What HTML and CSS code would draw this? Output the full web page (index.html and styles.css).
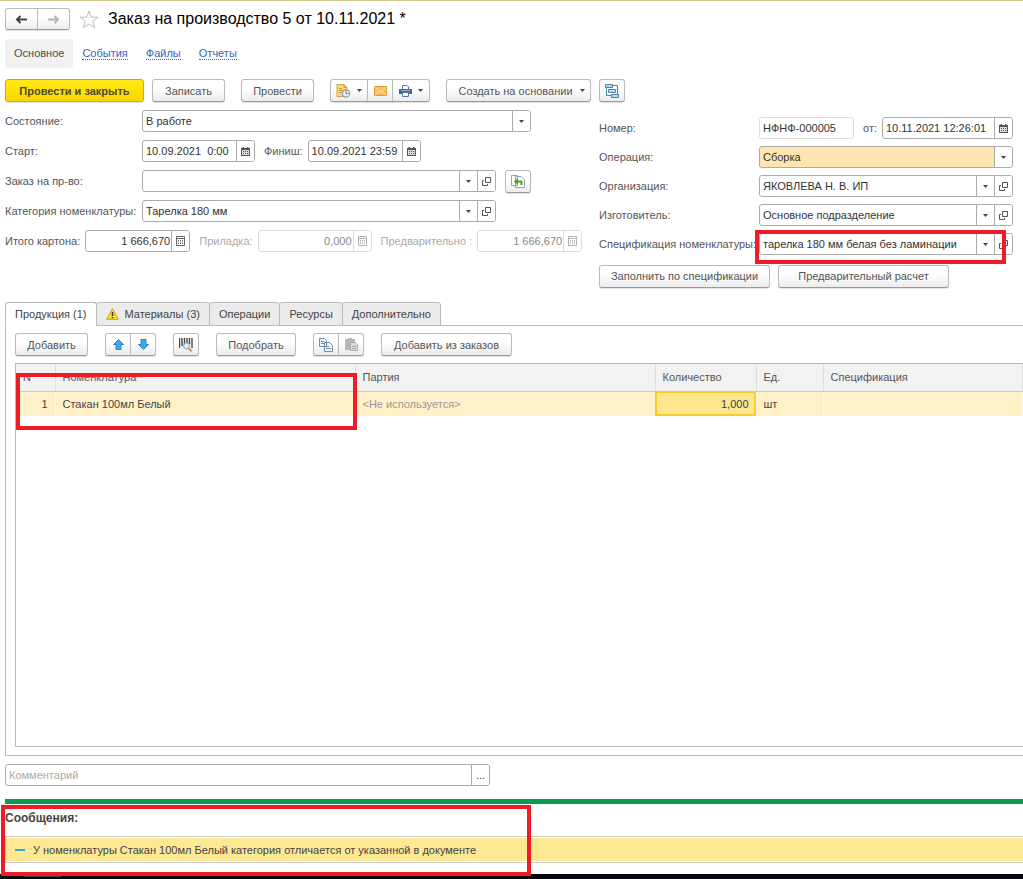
FILE: index.html
```html
<!DOCTYPE html>
<html lang="ru">
<head>
    <meta charset="UTF-8">
    <meta name="viewport" content="width=device-width, initial-scale=1.0">
    <title>Заказ на производство 5 от 10.11.2021 *</title>
    <link rel="stylesheet" href="styles.css">
</head>
<body>
    <svg class="sprite" aria-hidden="true">
        <symbol id="i-caret" viewBox="0 0 5 3"><path d="M0 0h5L2.5 3z" fill="#444"/></symbol>
        <symbol id="i-open" viewBox="0 0 9 9"><path d="M3.5.5h5v5h-5zM2 3.5H.5v5h5V7" fill="none" stroke="#555"/></symbol>
        <symbol id="i-date" viewBox="0 0 9 9"><path d="M0 1h1.500V0H3v1h3V0h1.500v1H9v8H0z" fill="#555"/><path d="M1 3h7v5H1z" fill="#ddd"/><path d="M2 4.500h5M2 6.500h5" stroke="#555" stroke-dasharray="1 1"/></symbol>
        <symbol id="i-calc" viewBox="0 0 9 10"><path d="M.5.5h8v9h-8zM.5 2.500h8" fill="none" stroke="#666"/><path d="M2 4.500h5M2 6h5M2 7.500h5" stroke="#666" stroke-dasharray="1 1"/></symbol>
    </svg>

    <header class="title-bar">
        <div class="group">
            <button type="button" class="btn nav" aria-label="Назад"><svg width="13" height="9" viewBox="0 0 13 9"><path d="M12 4.500H2M5.500 1L2 4.500 5.500 8" fill="none" stroke="#444" stroke-width="2"/></svg></button>
            <button type="button" class="btn nav" aria-label="Вперед"><svg width="13" height="9" viewBox="0 0 13 9"><path d="M1 4.500h10M7.500 1L11 4.500 7.500 8" fill="none" stroke="#b5b5b5" stroke-width="2"/></svg></button>
        </div>
        <button type="button" class="star" aria-label="В избранное"><svg width="20" height="19" viewBox="0 0 20 19"><path d="M10 1l2.300 6.200H19l-5.300 4 2 6.600L10 13.900l-5.700 3.900 2-6.600L1 7.200h6.700z" fill="#fff" stroke="#b9bdc3"/></svg></button>
        <h1>Заказ на производство 5 от 10.11.2021 *</h1>
    </header>

    <nav class="sections">
        <a href="#main" class="current">Основное</a>
        <a href="#events"><span>События</span></a>
        <a href="#files"><span>Файлы</span></a>
        <a href="#reports"><span>Отчеты</span></a>
    </nav>

    <div class="commands">
        <button type="button" class="btn primary">Провести и закрыть</button>
        <button type="button" class="btn w-72">Записать</button>
        <button type="button" class="btn w-72 apart">Провести</button>
        <div class="group apart">
            <button type="button" class="btn drop" aria-label="Создать задачу">
                <svg width="15" height="14" viewBox="0 0 15 14"><path d="M1 .5h7l3 3v9H1z" fill="#f6d678" stroke="#d2a63f"/><path d="M8 .5v3h3M3 4.500h3M3 6.500h4M3 8.500h3" fill="none" stroke="#c99a35"/><circle cx="10" cy="9.500" r="3.700" fill="#eef4fa" stroke="#7089ab"/><path d="M10 6.500v3h2.500" fill="none" stroke="#d06030"/></svg>
                <svg width="5" height="3"><use href="#i-caret"/></svg>
            </button>
            <button type="button" class="btn icon" aria-label="Отправить"><svg width="13" height="10" viewBox="0 0 13 10"><path d="M.5.5h12v9H.5z" fill="#f5bf5d" stroke="#d99c3a"/><path d="M1 1l5.500 5L12 1M1 9l4-4.200M12 9L8 4.800" fill="none" stroke="#fbe3b2"/></svg></button>
            <button type="button" class="btn drop" aria-label="Печать">
                <svg width="13" height="12" viewBox="0 0 13 12"><path d="M3.500 4V.5H8L9.500 2v2" fill="#fff" stroke="#57789a"/><path d="M0 4h13v5H0z" fill="#3f6b92"/><path d="M3.500 7.500h6v4h-6z" fill="#fff" stroke="#57789a"/><path d="M2 5.500h9" stroke="#8fb0cc"/></svg>
                <svg width="5" height="3"><use href="#i-caret"/></svg>
            </button>
        </div>
        <button type="button" class="btn based apart">Создать на основании <svg width="5" height="3"><use href="#i-caret"/></svg></button>
        <button type="button" class="btn icon" aria-label="Структура подчиненности"><svg width="14" height="14" viewBox="0 0 14 14"><path d="M1.500 3.500v8H6M8 1.500h4.500V10" fill="none" stroke="#4a83a8"/><g fill="#b5d9ee" stroke="#4a83a8"><path d="M.5.5h7v3h-7zM3.500 5.500h7v3h-7zM6.500 10.500h7v3h-7z"/></g></svg></button>
    </div>

    <form class="details">
        <div class="column">
            <div class="row">
                <label for="state" class="caption">Состояние:</label>
                <div class="field grow">
                    <select id="state"><option>В работе</option></select>
                    <span class="side"><svg width="5" height="3"><use href="#i-caret"/></svg></span>
                </div>
            </div>
            <div class="row">
                <label for="start" class="caption">Старт:</label>
                <div class="field date">
                    <input type="text" id="start" value="10.09.2021&nbsp; 0:00">
                    <button type="button" class="side" aria-label="Выбрать дату"><svg width="9" height="9"><use href="#i-date"/></svg></button>
                </div>
                <label for="finish" class="next">Финиш:</label>
                <div class="field date">
                    <input type="text" id="finish" value="10.09.2021 23:59">
                    <button type="button" class="side" aria-label="Выбрать дату"><svg width="9" height="9"><use href="#i-date"/></svg></button>
                </div>
            </div>
            <div class="row">
                <label for="order" class="caption">Заказ на пр-во:</label>
                <div class="field grow">
                    <select id="order"><option></option></select>
                    <span class="side"><svg width="5" height="3"><use href="#i-caret"/></svg></span>
                    <button type="button" class="side" aria-label="Открыть"><svg width="9" height="9"><use href="#i-open"/></svg></button>
                </div>
                <button type="button" class="btn icon fill" aria-label="Заполнить по заказу"><svg width="14" height="13" viewBox="0 0 14 13"><path d="M.5.5h6v10h-6zM4.500 1.500h6l3 3v8h-9z" fill="#fff" stroke="#8fa5b5"/><path d="M10.500 10V6.500H6" fill="none" stroke="#3aa914" stroke-width="2"/><path d="M3 6.500L7 3v7z" fill="#3aa914"/></svg></button>
            </div>
            <div class="row">
                <label for="category" class="caption">Категория номенклатуры:</label>
                <div class="field grow short">
                    <select id="category"><option>Тарелка 180 мм</option></select>
                    <span class="side"><svg width="5" height="3"><use href="#i-caret"/></svg></span>
                    <button type="button" class="side" aria-label="Открыть"><svg width="9" height="9"><use href="#i-open"/></svg></button>
                </div>
            </div>
            <div class="row totals">
                <label for="total">Итого картона:</label>
                <div class="field number">
                    <input type="text" id="total" value="1 666,670">
                    <button type="button" class="side" aria-label="Калькулятор"><svg width="9" height="10"><use href="#i-calc"/></svg></button>
                </div>
                <label for="setup" class="next off">Приладка:</label>
                <div class="field number wide off">
                    <input type="text" id="setup" value="0,000" disabled>
                    <button type="button" class="side" aria-label="Калькулятор" disabled><svg width="9" height="10"><use href="#i-calc"/></svg></button>
                </div>
                <label for="prelim" class="next off">Предварительно :</label>
                <div class="field number off">
                    <input type="text" id="prelim" value="1 666,670" disabled>
                    <button type="button" class="side" aria-label="Калькулятор" disabled><svg width="9" height="10"><use href="#i-calc"/></svg></button>
                </div>
            </div>
        </div>

        <div class="column right">
            <div class="row">
                <label for="number" class="caption">Номер:</label>
                <div class="field grow pale"><input type="text" id="number" value="НФНФ-000005"></div>
                <label for="date" class="next">от:</label>
                <div class="field stamp">
                    <input type="text" id="date" value="10.11.2021 12:26:01">
                    <button type="button" class="side" aria-label="Выбрать дату"><svg width="9" height="9"><use href="#i-date"/></svg></button>
                </div>
            </div>
            <div class="row">
                <label for="operation" class="caption">Операция:</label>
                <div class="field grow accent">
                    <select id="operation"><option>Сборка</option></select>
                    <span class="side"><svg width="5" height="3"><use href="#i-caret"/></svg></span>
                </div>
            </div>
            <div class="row">
                <label for="company" class="caption">Организация:</label>
                <div class="field grow">
                    <select id="company"><option>ЯКОВЛЕВА Н. В. ИП</option></select>
                    <span class="side"><svg width="5" height="3"><use href="#i-caret"/></svg></span>
                    <button type="button" class="side" aria-label="Открыть"><svg width="9" height="9"><use href="#i-open"/></svg></button>
                </div>
            </div>
            <div class="row">
                <label for="maker" class="caption">Изготовитель:</label>
                <div class="field grow">
                    <select id="maker"><option>Основное подразделение</option></select>
                    <span class="side"><svg width="5" height="3"><use href="#i-caret"/></svg></span>
                    <button type="button" class="side" aria-label="Открыть"><svg width="9" height="9"><use href="#i-open"/></svg></button>
                </div>
            </div>
            <div class="row">
                <label for="spec" class="caption">Спецификация номенклатуры:</label>
                <div class="field grow">
                    <select id="spec"><option>тарелка 180 мм белая без ламинации</option></select>
                    <span class="side"><svg width="5" height="3"><use href="#i-caret"/></svg></span>
                    <button type="button" class="side" aria-label="Открыть"><svg width="9" height="9"><use href="#i-open"/></svg></button>
                    <span class="mark mark-spec"></span>
                </div>
            </div>
            <div class="row actions">
                <button type="button" class="btn">Заполнить по спецификации</button>
                <button type="button" class="btn">Предварительный расчет</button>
            </div>
        </div>
    </form>

    <div class="tabs" role="tablist">
        <button type="button" role="tab" class="tab active" aria-selected="true">Продукция (1)</button>
        <button type="button" role="tab" class="tab"><svg width="13" height="12" viewBox="0 0 13 12"><path d="M6.500.7l5.800 10.600H.7z" fill="#ffe02e" stroke="#c9a50c" stroke-linejoin="round"/><path d="M6.500 4v4M6.500 9v1.300" stroke="#333" stroke-width="1.500"/></svg>Материалы (3)</button>
        <button type="button" role="tab" class="tab">Операции</button>
        <button type="button" role="tab" class="tab">Ресурсы</button>
        <button type="button" role="tab" class="tab">Дополнительно</button>
    </div>

    <section class="panel">
        <div class="tools">
            <button type="button" class="btn w-72">Добавить</button>
            <div class="group">
                <button type="button" class="btn icon" aria-label="Вверх"><svg width="11" height="11" viewBox="0 0 11 11"><path d="M5.500.5l5 5H8v5H3v-5H.5z" fill="#3fa9e6" stroke="#2587c4"/></svg></button>
                <button type="button" class="btn icon" aria-label="Вниз"><svg width="11" height="11" viewBox="0 0 11 11"><path d="M5.500 10.500l5-5H8v-5H3v5H.5z" fill="#3fa9e6" stroke="#2587c4"/></svg></button>
            </div>
            <button type="button" class="btn icon" aria-label="Поиск по штрихкоду"><svg width="14" height="14" viewBox="0 0 14 14"><path d="M.5 0v10M3 0v8M5.500 0v7M8 0v5M10.500 0v6M13 0v10" stroke="#444" stroke-width="1.400"/><circle cx="7.500" cy="8" r="3" fill="#dcebf7" stroke="#8aa0b5"/><path d="M9.700 10.200l3 3" stroke="#c98d5e" stroke-width="2"/></svg></button>
            <button type="button" class="btn w-80">Подобрать</button>
            <div class="group">
                <button type="button" class="btn icon" aria-label="Копировать"><svg width="14" height="14" viewBox="0 0 14 14"><path d="M.5.5h5l2 2v6h-7zM5.500 4.500h5l3 3v6h-8z" fill="#f3f8fc" stroke="#6f8ca5"/><path d="M2 3.500h3M2 5.500h3M7 8.500h3M7 10.500h5" stroke="#6f8ca5"/></svg></button>
                <button type="button" class="btn icon" aria-label="Вставить" disabled><svg width="13" height="13" viewBox="0 0 13 13"><path d="M0 1h3V0h4v1h3v11H0z" fill="#b5b5b5"/><path d="M5.500 4.500h5l2 2v6h-7z" fill="#ddd" stroke="#aaa"/><path d="M7 8.500h4M7 10.500h4" stroke="#aaa"/></svg></button>
            </div>
            <button type="button" class="btn w-130">Добавить из заказов</button>
        </div>

        <div class="grid">
            <table>
                <colgroup>
                    <col class="c-num"><col class="c-item"><col class="c-item"><col class="c-qty"><col class="c-unit"><col>
                </colgroup>
                <thead>
                    <tr><th>N</th><th>Номенклатура</th><th>Партия</th><th>Количество</th><th>Ед.</th><th>Спецификация</th></tr>
                </thead>
                <tbody>
                    <tr>
                        <td class="num">1</td>
                        <td>Стакан 100мл Белый</td>
                        <td class="muted">&lt;Не используется&gt;</td>
                        <td class="num selected">1,000</td>
                        <td>шт</td>
                        <td></td>
                    </tr>
                </tbody>
            </table>
            <span class="mark mark-item"></span>
        </div>
    </section>

    <div class="field comment">
        <input type="text" placeholder="Комментарий" aria-label="Комментарий">
        <button type="button" class="side">...</button>
    </div>

    <section class="messages">
        <h2>Сообщения:</h2>
        <ul>
            <li>У номенклатуры Стакан 100мл Белый категория отличается от указанной в документе</li>
        </ul>
        <span class="mark mark-messages"></span>
    </section>
    <footer class="taskbar"><span></span></footer>
</body>
</html>
```
FILE: styles.css
```css
* {
    box-sizing: border-box;
}
body {
    margin: 0;
    min-height: 100vh;
    display: flex;
    flex-direction: column;
    border-top: 1px solid #d3c68c;
    background: #fff;
    color: #555;
    font: 11px/16px "Liberation Sans", Arial, sans-serif;
    overflow-x: hidden;
}
button,
input,
select {
    font: inherit;
    color: inherit;
    margin: 0;
}
svg {
    display: block;
    flex: none;
}
.sprite {
    position: absolute;
    width: 0;
    height: 0;
}

/* Кнопки */
.btn {
    display: flex;
    align-items: center;
    justify-content: center;
    height: 23px;
    padding: 0 11px;
    border: 1px solid #bbb;
    border-bottom-color: #999;
    border-radius: 3px;
    background: linear-gradient(#fff 40%, #ececec);
    box-shadow: 0 1px 1px rgba(0, 0, 0, 0.12);
    white-space: nowrap;
}
.btn.primary {
    width: 139px;
    border-color: #c9ae00;
    background: linear-gradient(#ffe817, #fbd800);
    color: #4d4a35;
    font-weight: bold;
}
.btn.icon {
    width: 26px;
    padding: 0;
}
.btn.drop {
    width: 38px;
    gap: 6px;
    padding: 0;
}
.btn.nav {
    width: 33px;
    height: 22px;
    padding: 0;
}
.w-72 {
    width: 73px;
}
.w-80 {
    width: 80px;
}
.w-130 {
    width: 131px;
}
.group {
    display: flex;
}
.group .btn + .btn {
    margin-left: -1px;
    border-top-left-radius: 0;
    border-bottom-left-radius: 0;
}
.group .btn:not(:last-child) {
    border-top-right-radius: 0;
    border-bottom-right-radius: 0;
}

/* Заголовок */
.title-bar {
    display: flex;
    align-items: center;
    padding: 6px 5px 0;
}
.star {
    padding: 0;
    margin: 0 9px;
    border: 0;
    background: none;
}
h1 {
    margin: 0;
    color: #000;
    font-size: 16px;
    line-height: 24px;
    font-weight: normal;
}
.sections {
    display: flex;
    gap: 18px;
    padding: 8px 5px 0;
    line-height: 29px;
}
.sections a {
    color: #3565c0;
    text-decoration: none;
}
.sections a span {
    border-bottom: 1px dotted #3565c0;
}
.sections .current {
    margin-right: -9px;
    padding: 0 9px;
    border-radius: 3px;
    background: #f1f1f1;
    color: #4d4d4d;
}
.commands {
    display: flex;
    gap: 8px;
    padding: 11px 5px 8px;
}
.commands .apart {
    margin-left: 8px;
}
.btn.based {
    width: 145px;
    gap: 7px;
    padding: 0 5px 0 11px;
}

/* Реквизиты документа */
.details {
    display: grid;
    grid-template-columns: 526fr 414fr;
    gap: 68px;
    padding: 0 10px 0 5px;
}
.column {
    display: flex;
    flex-direction: column;
    gap: 8px;
    min-width: 0;
}
.column.right {
    gap: 7px;
    padding-top: 7px;
}
.row {
    display: flex;
    align-items: center;
    height: 22px;
    white-space: nowrap;
}
.caption {
    flex: none;
    width: 137px;
}
.right .caption {
    width: 160px;
}
.next {
    margin: 0 5px 0 9px;
}
.field {
    display: flex;
    position: relative;
    flex: none;
    height: 22px;
    border: 1px solid #aaa;
    border-radius: 3px;
    background: #fff;
    color: #333;
}
.field.grow {
    flex: 1;
    min-width: 0;
}
.field.short {
    margin-right: 35px;
}
.field input,
.field select {
    flex: 1;
    min-width: 0;
    width: 100%;
    padding: 0 3px;
    border: 0;
    outline: 0;
    border-radius: 2px;
    background: none;
    appearance: none;
}
.side {
    display: flex;
    align-items: center;
    justify-content: center;
    flex: none;
    width: 18px;
    padding: 0;
    border: 0;
    border-left: 1px solid #aaa;
    background: #fff;
    border-radius: 0 2px 2px 0;
}
.field.date {
    width: 113px;
}
.field.stamp {
    width: 131px;
}
.field.number {
    width: 105px;
}
.field.wide {
    width: 114px;
}
.number input {
    padding: 0 1px;
    text-align: right;
}
.field.pale {
    border-color: #ddd;
}
.field.accent {
    background: #ffe6b0;
}
label.off {
    color: #aaa;
}
.field.off,
.off .side {
    border-color: #ddd;
    color: #888;
}
.off svg {
    opacity: 0.5;
}
.totals label:first-child {
    margin-right: 5px;
}
.btn.fill {
    margin-left: 9px;
}
.actions {
    gap: 8px;
    margin-top: 3px;
}
.actions .btn {
    width: 171px;
}

/* Вкладки и таблица */
.tabs {
    display: flex;
    position: relative;
    margin: 15px 0 -1px 5px;
}
.tab {
    display: flex;
    align-items: center;
    gap: 6px;
    height: 24px;
    padding: 0 9px;
    border: 1px solid #bbb;
    border-radius: 3px 3px 0 0;
    background: #ebebeb;
    color: #444;
}
.tab + .tab {
    margin-left: -1px;
}
.tab.active {
    border-bottom-color: #fff;
    background: #fff;
}
.panel {
    display: flex;
    flex-direction: column;
    flex: 1;
    margin-left: 5px;
    padding: 7px 0 8px 9px;
    border: 1px solid #bbb;
    border-right: 0;
}
.tools {
    display: flex;
    gap: 17px;
}
.grid {
    position: relative;
    flex: 1;
    margin-top: 7px;
    border: 1px solid #bbb;
    border-right: 0;
}
table {
    width: 100%;
    table-layout: fixed;
    border-collapse: collapse;
}
.c-num {
    width: 39px;
}
.c-item {
    width: 300px;
}
.c-qty {
    width: 101px;
}
.c-unit {
    width: 67px;
}
th,
td {
    padding: 0 7px;
    text-align: left;
    font-weight: normal;
    white-space: nowrap;
}
th {
    height: 27px;
    border-right: 1px solid #ddd;
    border-bottom: 1px solid #ccc;
    background: #f2f2f2;
}
td {
    height: 25px;
    border-right: 1px solid #fff8e2;
    background: #fff0c8;
    color: #444;
}
.num {
    text-align: right;
}
td.muted {
    color: #999;
}
td.selected {
    outline: 2px solid #fccb2a;
    outline-offset: -2px;
    background: #ffe68f;
}
.comment {
    width: 485px;
    margin: 8px 0 0 5px;
}
.comment input::placeholder {
    color: #aaa;
    opacity: 1;
}

/* Сообщения */
.messages {
    position: relative;
    margin: 13px 0 0 5px;
    padding-bottom: 11px;
    border-top: 5px solid #0a9b50;
}
h2 {
    margin: 6px 0 9px;
    color: #444;
    font-size: 12px;
    line-height: 17px;
}
.messages ul {
    margin: 0;
    padding: 1px 0;
    border: 1px solid #ccc;
    border-right: 0;
    list-style: none;
}
.messages li {
    display: flex;
    align-items: center;
    gap: 8px;
    height: 23px;
    padding-left: 9px;
    background: #fde893;
    color: #444;
}
.messages li::before {
    content: "";
    width: 10px;
    height: 2px;
    background: #2fa8dc;
}
.taskbar {
    height: 5px;
    padding-left: 24px;
    background: #05070c;
}
.taskbar span {
    display: block;
    width: 38px;
    height: 3px;
    background: #3a3d42;
}

/* Красные рамки поверх формы */
.mark {
    position: absolute;
    z-index: 1;
    border: 4px solid #ee1c25;
    pointer-events: none;
}
.mark-spec {
    inset: -4px 6px -10px -5px;
}
.mark-item {
    top: 9px;
    left: 0;
    width: 341px;
    height: 57px;
}
.mark-messages {
    top: 1px;
    bottom: -2px;
    left: -4px;
    width: 530px;
}
```
